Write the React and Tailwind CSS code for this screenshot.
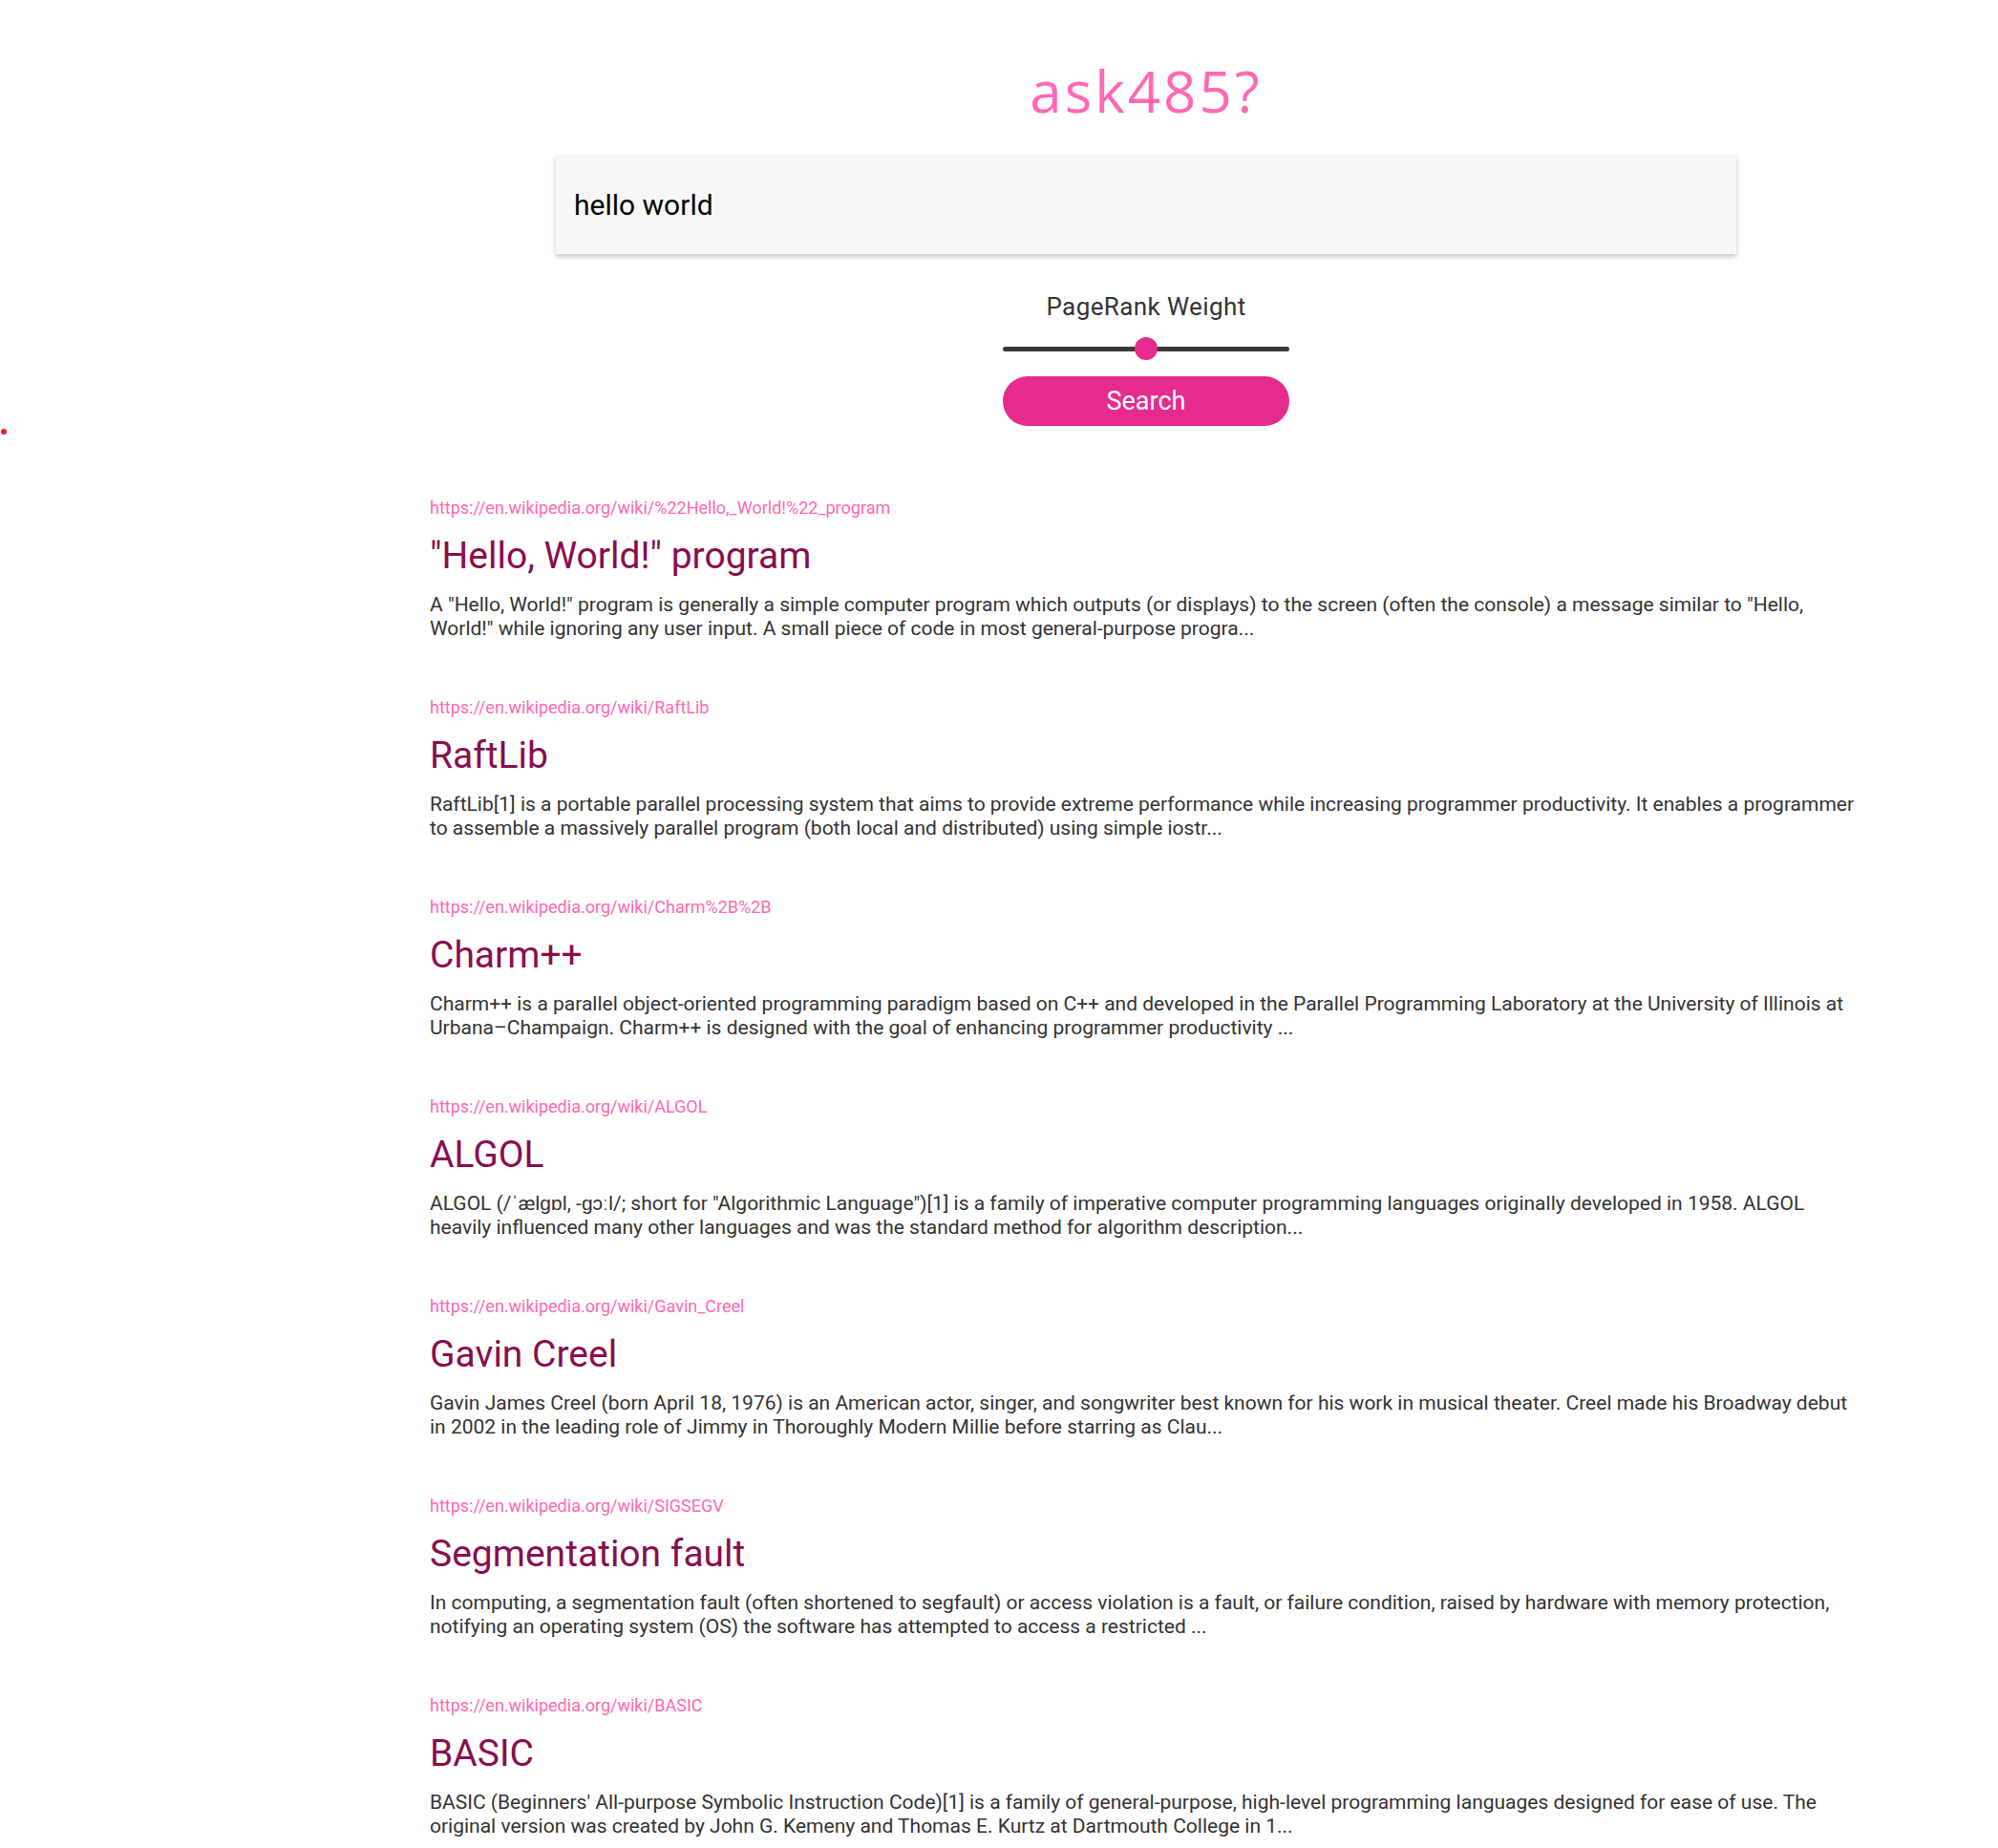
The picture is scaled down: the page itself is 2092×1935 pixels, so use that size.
import { useState } from 'react'

const RESULTS=[
  {url:'https://en.wikipedia.org/wiki/%22Hello,_World!%22_program',title:'"Hello, World!" program',desc:'A "Hello, World!" program is generally a simple computer program which outputs (or displays) to the screen (often the console) a message similar to "Hello, World!" while ignoring any user input. A small piece of code in most general-purpose progra...'},
  {url:'https://en.wikipedia.org/wiki/RaftLib',title:'RaftLib',desc:'RaftLib[1] is a portable parallel processing system that aims to provide extreme performance while increasing programmer productivity. It enables a programmer to assemble a massively parallel program (both local and distributed) using simple iostr...'},
  {url:'https://en.wikipedia.org/wiki/Charm%2B%2B',title:'Charm++',desc:'Charm++ is a parallel object-oriented programming paradigm based on C++ and developed in the Parallel Programming Laboratory at the University of Illinois at Urbana–Champaign. Charm++ is designed with the goal of enhancing programmer productivity ...'},
  {url:'https://en.wikipedia.org/wiki/ALGOL',title:'ALGOL',desc:'ALGOL (/ˈælɡɒl, -ɡɔːl/; short for "Algorithmic Language")[1] is a family of imperative computer programming languages originally developed in 1958. ALGOL heavily influenced many other languages and was the standard method for algorithm description...'},
  {url:'https://en.wikipedia.org/wiki/Gavin_Creel',title:'Gavin Creel',desc:'Gavin James Creel (born April 18, 1976) is an American actor, singer, and songwriter best known for his work in musical theater. Creel made his Broadway debut in 2002 in the leading role of Jimmy in Thoroughly Modern Millie before starring as Clau...'},
  {url:'https://en.wikipedia.org/wiki/SIGSEGV',title:'Segmentation fault',desc:'In computing, a segmentation fault (often shortened to segfault) or access violation is a fault, or failure condition, raised by hardware with memory protection, notifying an operating system (OS) the software has attempted to access a restricted ...'},
  {url:'https://en.wikipedia.org/wiki/BASIC',title:'BASIC',desc:"BASIC (Beginners' All-purpose Symbolic Instruction Code)[1] is a family of general-purpose, high-level programming languages designed for ease of use. The original version was created by John G. Kemeny and Thomas E. Kurtz at Dartmouth College in 1..."},
];

function Result({r}){
  return <div className="mb-[58px]">
    <a href="#" className="block text-[18px] leading-[24px] text-[#ff69b4]">{r.url}</a>
    <h2 className="mt-[16px] text-[39px] leading-[44px] font-normal text-[#880e4f]">{r.title}</h2>
    <p className="mt-[17px] text-[21px] leading-[25px] text-[#333]">{r.desc}</p>
  </div>;
}

export default function App(){
  const [q,setQ]=useState('hello world');
  return <div className="flex min-h-screen bg-white font-['Roboto',sans-serif]">
    {/* colonne gauche */}
    <div className="w-[450px] shrink-0">
      <div className="mt-[449px] ml-[1px] w-[6px] h-[6px] rounded-full bg-[#e8202a]"/>
    </div>

    <div className="w-[1500px] shrink-0">
      <h1 className="pt-[59px] text-center text-[60px] leading-[72px] tracking-[3px] text-[#ff69b4] font-['Open_Sans',sans-serif] font-normal">ask485?</h1>

      <div className="mt-[31px] mx-auto w-[1236px] h-[104px] bg-[#f7f7f7] shadow-[0_3px_5px_rgba(0,0,0,0.22)] flex items-center px-[19px]">
        <input value={q} onChange={e=>setQ(e.target.value)}
          className="w-full bg-transparent outline-none text-[30px] text-black font-['Roboto',sans-serif]"/>
      </div>

      <div className="mt-[39px] flex flex-col items-center">
        <div className="text-[26px] leading-[32px] tracking-[0.4px] text-[#333]">PageRank Weight</div>
        <div className="mt-[16px] w-[300px] h-[24px] flex items-center relative">
          <div className="w-full h-[5px] rounded-full bg-[#3a3a3a]"/>
          <div className="absolute left-[138px] top-0 w-[24px] h-[24px] rounded-full bg-[#e62b8e]"/>
        </div>
        <button className="mt-[17px] w-[300px] h-[52px] rounded-full bg-[#e62b8e] text-white text-[27px]">Search</button>
      </div>

      <div className="mt-[74px]">
        {RESULTS.map((r,i)=><Result key={i} r={r}/>)}
      </div>
    </div>
  </div>;
}
